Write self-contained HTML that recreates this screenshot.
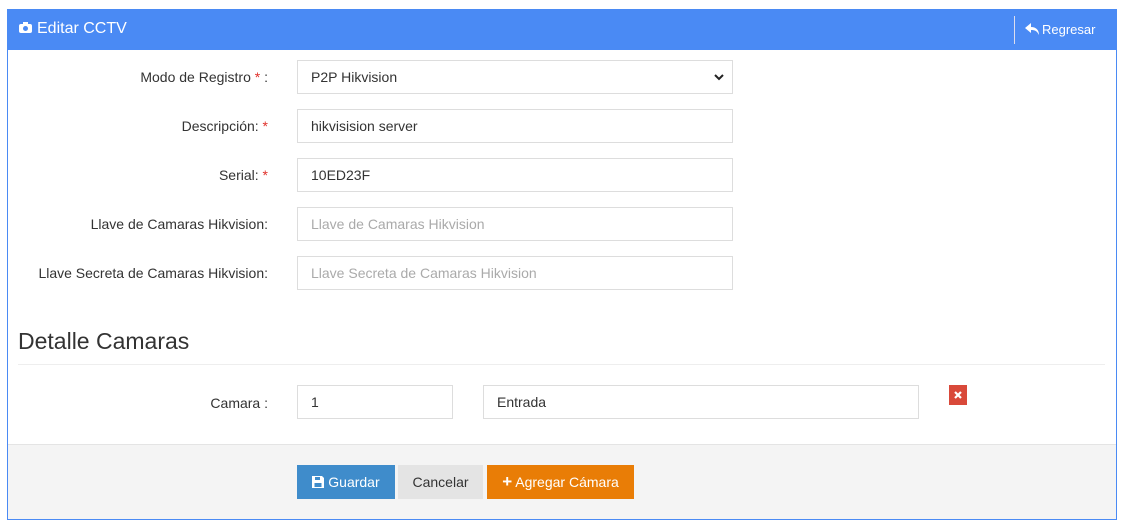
<!DOCTYPE html>
<html><head><meta charset="utf-8"><style>
*{box-sizing:border-box;margin:0;padding:0}
body{width:1123px;height:531px;background:#fff;font-family:"Liberation Sans",sans-serif;font-size:14px;color:#333;position:relative;overflow:hidden}
.panel{position:absolute;left:7px;top:9px;width:1110px;height:511px;border:1px solid #4a8af4;}
.hdr{position:absolute;left:0;top:0;width:100%;height:40px;background:#4a8af4;color:#fff}
.abs{position:absolute}
.lbl{position:absolute;right:855px;text-align:right;white-space:nowrap;font-size:14px;color:#333}
.req{color:#e0302a}
.inp{position:absolute;height:34px;border:1px solid #ddd;padding:0 13px;line-height:32px;font-size:14px;color:#333;background:#fff}
.ph{color:#aaa}
.btn{position:absolute;top:456px;height:34px;line-height:34px;text-align:center;font-size:14px}
</style></head><body>
<div class="panel">
 <div class="hdr">
  <svg class="abs" style="left:11px;top:12px" width="13" height="11" viewBox="0 0 13 11"><rect x="0" y="2" width="13" height="9" rx="2" fill="#fff"/><rect x="4" y="0" width="5" height="3" fill="#fff"/><circle cx="6.5" cy="6.5" r="2.5" fill="#4a8af4"/></svg>
  <span class="abs" style="left:29px;top:10px;font-size:16px">Editar CCTV</span>
  <div class="abs" style="left:1006px;top:6px;width:1px;height:28px;background:#dde"></div>
  <svg class="abs" style="left:1017px;top:13px" width="14" height="12" viewBox="0 0 14 12"><path d="M6 0L0 5l6 5V7c4 0 6 1 8 5 0-5-3-8-8-8z" fill="#fff"/></svg>
  <span class="abs" style="left:1034px;top:12px;font-size:13px">Regresar</span>
 </div>
</div>
<div class="lbl" style="top:69px;right:855px">Modo de Registro <span class="req">*</span> :</div>
<div class="inp" style="left:297px;top:60px;width:436px">P2P Hikvision<svg class="abs" style="right:8px;top:13px" width="10" height="7" viewBox="0 0 10 7"><path d="M1 1l4 4 4-4" stroke="#222" stroke-width="2" fill="none"/></svg></div>
<div class="lbl" style="top:118px">Descripción: <span class="req">*</span></div>
<div class="inp" style="left:297px;top:109px;width:436px">hikvisision server</div>
<div class="lbl" style="top:167px">Serial: <span class="req">*</span></div>
<div class="inp" style="left:297px;top:158px;width:436px">10ED23F</div>
<div class="lbl" style="top:216px">Llave de Camaras Hikvision:</div>
<div class="inp ph" style="left:297px;top:207px;width:436px">Llave de Camaras Hikvision</div>
<div class="lbl" style="top:265px">Llave Secreta de Camaras Hikvision:</div>
<div class="inp ph" style="left:297px;top:256px;width:436px">Llave Secreta de Camaras Hikvision</div>
<div class="abs" style="left:18px;top:328px;font-size:23px;color:#333">Detalle Camaras</div>
<div class="abs" style="left:18px;top:364px;width:1087px;height:1px;background:#eee"></div>
<div class="lbl" style="top:395px">Camara :</div>
<div class="inp" style="left:297px;top:385px;width:156px">1</div>
<div class="inp" style="left:483px;top:385px;width:436px">Entrada</div>
<div class="abs" style="left:949px;top:385px;width:18px;height:20px;background:#d9493a"><svg class="abs" style="left:5px;top:6px" width="8" height="8" viewBox="0 0 8 8"><path d="M1 1l6 6M7 1L1 7" stroke="#fff" stroke-width="2.2"/></svg></div>
<div class="abs" style="left:8px;top:444px;width:1108px;height:75px;background:#f4f4f4;border-top:1px solid #e4e4e4"></div>
<div class="btn" style="left:297px;top:465px;width:98px;background:#3f8ccb;color:#fff"><svg style="vertical-align:-1px" width="12" height="12" viewBox="0 0 12 12"><path d="M0 0h10l2 2v10H0z" fill="#fff"/><rect x="3" y="1" width="5" height="3" fill="#3f8ccb"/><rect x="2.5" y="7" width="7" height="4" fill="#3f8ccb"/></svg> Guardar</div>
<div class="btn" style="left:398px;top:465px;width:85px;background:#e4e4e4;color:#333">Cancelar</div>
<div class="btn" style="left:487px;top:465px;width:147px;background:#e97d06;color:#fff"><b style="font-size:17px">+</b> Agregar Cámara</div>
</body></html>
